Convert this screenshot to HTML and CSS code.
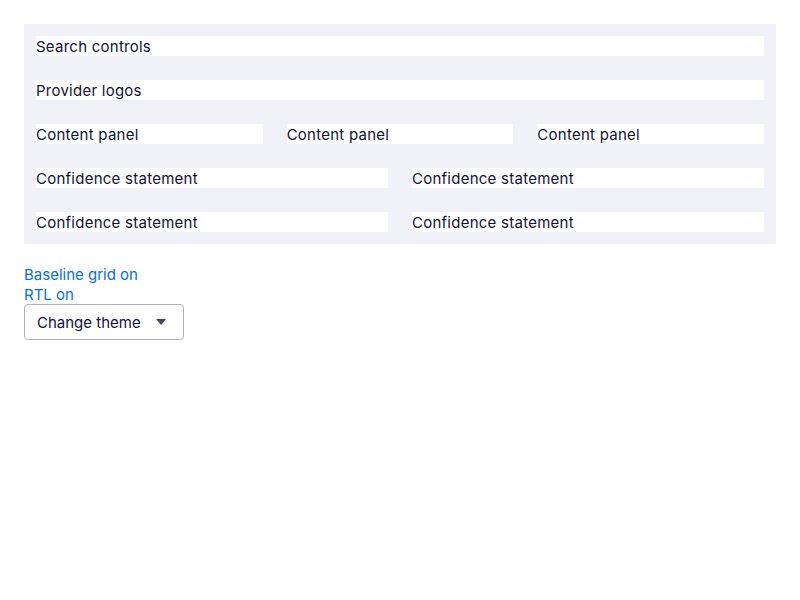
FILE: index.html
```html
<!DOCTYPE html>
<html>
<head>
<meta charset="utf-8">
<link rel="stylesheet" href="styles.css">
</head>
<body>
<div class="page">
  <div class="grid">
    <div class="row"><div class="cell">Search controls</div></div>
    <div class="row"><div class="cell">Provider logos</div></div>
    <div class="row three">
      <div class="cell">Content panel</div>
      <div class="cell">Content panel</div>
      <div class="cell">Content panel</div>
    </div>
    <div class="row two">
      <div class="cell">Confidence statement</div>
      <div class="cell">Confidence statement</div>
    </div>
    <div class="row two">
      <div class="cell">Confidence statement</div>
      <div class="cell">Confidence statement</div>
    </div>
  </div>
  <div class="controls">
    <a class="link">Baseline grid on</a>
    <a class="link">RTL on</a>
    <button class="select">Change theme
      <svg class="caret" width="10" height="6" viewBox="0 0 10 6"><path d="M0 0h10L5 6z" fill="#444560"/></svg>
    </button>
  </div>
</div>
</body>
</html>
```
FILE: styles.css
```css
* { box-sizing: border-box; }
body {
  margin: 0;
  font-family: Inter, "Noto Sans", sans-serif;
  color: #111236;
  background: #fff;
}
.page { padding: 24px; }
.grid {
  background: #f1f2f8;
  padding: 12px;
  display: flex;
  flex-direction: column;
  gap: 24px;
}
.row { display: grid; grid-template-columns: 1fr; gap: 24px; }
.row.three { grid-template-columns: 1fr 1fr 1fr; }
.row.two { grid-template-columns: 1fr 1fr; }
.cell {
  background: #fff;
  height: 20px;
  font-size: 15px;
  line-height: 22px;
  letter-spacing: 0.25px;
}
.controls {
  margin-top: 20px;
  display: flex;
  flex-direction: column;
  align-items: flex-start;
}
.link {
  color: #0770e3;
  font-size: 15px;
  line-height: 20px;
  padding-top: 1px;
  margin-bottom: -1px;
}
.select {
  margin-top: 0;
  width: 160px;
  height: 36px;
  border: 1px solid #b2b2bf;
  border-radius: 4px;
  background: #fff;
  font-family: inherit;
  font-size: 15px;
  color: #111236;
  text-align: left;
  padding: 0 12px;
  display: flex;
  align-items: center;
  justify-content: space-between;
}
.caret { margin-right: 5px; }
```
